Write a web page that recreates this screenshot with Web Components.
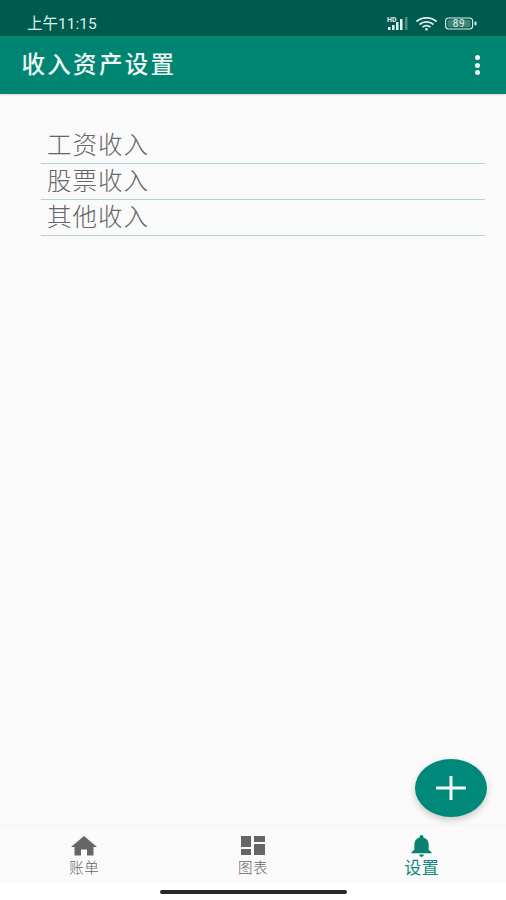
<!DOCTYPE html>
<html>
<head>
<meta charset="utf-8">
<style>
  html, body { margin: 0; height: 100%; background: #fff; }
  body { font-family: "Roboto", "Noto Sans CJK SC", sans-serif; }
</style>
</head>
<body>
<settings-screen>
  <income-row>工资收入</income-row>
  <income-row>股票收入</income-row>
  <income-row>其他收入</income-row>
</settings-screen>

<script>
const FONT = `"Roboto", "Noto Sans CJK SC", sans-serif`;

class StatusBar extends HTMLElement {
  constructor() {
    super();
    this.attachShadow({ mode: "open" });
  }
  connectedCallback() {
    this.shadowRoot.innerHTML = `
    <style>
      :host { display: flex; align-items: center; justify-content: space-between; height: 36px; padding: 10px 29px 0 27px; background: #005b4f; color: #dfeeea; font: 15.5px/1 ${FONT}; box-sizing: border-box; }
      span { margin-top: 4px; }
      .icons { display: flex; align-items: center; gap: 6px; }
      svg { display: block; }
    </style>
    <span>上午11:15</span>
    <div class="icons">
      <svg width="24" height="15" viewBox="0 0 24 15" fill="#e6f0ed">
        <text x="2" y="6" font-size="7" font-weight="700" font-family="Roboto">HD</text>
        <rect x="3" y="11" width="2.500" height="3"/>
        <rect x="7" y="9" width="2.500" height="5"/>
        <rect x="11" y="6" width="2.500" height="8"/>
        <rect x="15" y="3" width="2.500" height="11"/>
        <rect x="20" y="1" width="2.500" height="13" opacity=".35"/>
      </svg>
      <svg width="24" height="15" viewBox="0 0 24 15" fill="none" stroke="#e6f0ed" stroke-width="1.700">
        <path d="M1.500 5.500C7 .6 16 .6 21.500 5.500"/>
        <path d="M4.500 8.500C8.500 5 14.500 5 18.500 8.500"/>
        <path d="M7.500 11.200C9.800 9.400 13.200 9.400 15.500 11.200"/>
        <circle cx="11.500" cy="13.300" r="1.300" fill="#e6f0ed" stroke="none"/>
      </svg>
      <svg width="32" height="13" viewBox="0 0 32 13">
        <rect x=".6" y="1" width="27" height="11" rx="3" fill="none" stroke="#dfeeea" stroke-width="1.100"/>
        <rect x="2.500" y="2.800" width="23" height="7.400" rx="1.500" fill="#3f8577"/>
        <text x="14" y="10" text-anchor="middle" font-size="10" font-family="Roboto" fill="#e6f0ed" letter-spacing=".6">89</text>
        <rect x="29.500" y="4.500" width="2" height="4" rx="1" fill="#dfeeea"/>
      </svg>
    </div>`;
  }
}

class AppBar extends HTMLElement {
  constructor() {
    super();
    this.attachShadow({ mode: "open" });
  }
  connectedCallback() {
    this.shadowRoot.innerHTML = `
    <style>
      :host { display: flex; align-items: center; justify-content: space-between; height: 58px; padding: 0 26px 0 21.500px; background: #008573; color: #eef6f4; box-sizing: border-box; box-shadow: 0 1px 2px #0002; position: relative; }
      h1 { margin: 2px 0 0; font: 500 23.500px/1 ${FONT}; letter-spacing: 2.300px; }
      .more { display: flex; flex-direction: column; gap: 2.500px; }
      .more i { width: 5px; height: 5px; border-radius: 50%; background: #f2f8f6; }
    </style>
    <h1>${this.getAttribute("title")}</h1>
    <div class="more"><i></i><i></i><i></i></div>`;
  }
}

class IncomeRow extends HTMLElement {
  constructor() {
    super();
    this.attachShadow({ mode: "open" });
  }
  connectedCallback() {
    this.shadowRoot.innerHTML = `
    <style>
      :host { display: flex; align-items: center; height: 36px; padding: 1px 0 0 6px; box-sizing: border-box; border-bottom: 1px solid #b4d2d9; color: #666; font: 300 24.500px/1 ${FONT}; letter-spacing: 1px; }
    </style>
    <slot></slot>`;
  }
}

class NavItem extends HTMLElement {
  constructor() {
    super();
    this.attachShadow({ mode: "open" });
  }
  connectedCallback() {
    const active = this.hasAttribute("active");
    this.shadowRoot.innerHTML = `
    <style>
      :host { flex: 1; display: flex; flex-direction: column; align-items: center; font: ${active ? 400 : 300} ${active ? 17 : 14.5}px/16px ${FONT}; letter-spacing: ${active ? .4 : .6}px; }
      .icon { height: 25px; display: flex; align-items: center; margin-bottom: ${active ? 2 : 3}px; }
      span { color: ${active ? "#12897a" : "#666"}; }
      svg { display: block; }
    </style>
    <div class="icon"><slot></slot></div>
    <span>${this.getAttribute("label")}</span>`;
  }
}

class BottomNav extends HTMLElement {
  constructor() {
    super();
    this.attachShadow({ mode: "open" });
  }
  connectedCallback() {
    this.shadowRoot.innerHTML = `
    <style>
      :host { display: flex; height: 58px; padding-top: 7px; box-sizing: border-box; background: #fafafa; border-top: 1px solid #f3f3f3; }
    </style>
    <slot></slot>`;
  }
}

class AddButton extends HTMLElement {
  constructor() {
    super();
    this.attachShadow({ mode: "open" });
  }
  connectedCallback() {
    this.shadowRoot.innerHTML = `
    <style>
      :host { position: absolute; right: 19px; bottom: 83px; width: 72px; height: 58px; border-radius: 50%; background: #00897b; display: flex; align-items: center; justify-content: center; box-shadow: 0 3px 7px #0003; }
      svg { display: block; }
    </style>
    <svg width="30" height="24" viewBox="0 0 30 24"><path d="M0 12h30M15 0v24" stroke="#f4faf8" stroke-width="3" fill="none"/></svg>`;
  }
}

class SettingsScreen extends HTMLElement {
  constructor() {
    super();
    this.attachShadow({ mode: "open" });
  }
  connectedCallback() {
    this.shadowRoot.innerHTML = `
    <style>
      :host { display: flex; flex-direction: column; height: 900px; position: relative; background: #fff; overflow: hidden; }
      main { flex: 1; background: #fafafa; padding: 34px 21px 0 41px; display: flex; flex-direction: column; }
      .home { height: 17px; display: flex; align-items: center; justify-content: center; background: #fff; }
      .home i { width: 187px; height: 4px; border-radius: 2px; background: #2a2a2a; }
    </style>
    <status-bar></status-bar>
    <app-bar title="收入资产设置"></app-bar>
    <main><slot></slot></main>
    <add-button></add-button>
    <bottom-nav>
      <nav-item label="账单">
        <svg width="26" height="20" viewBox="0 0 26 20"><path d="M13 0 0 11h3.500v8.500h6.500v-6h6v6h6.500V11H26z" fill="#666"/></svg>
      </nav-item>
      <nav-item label="图表">
        <svg width="24" height="19" viewBox="0 0 24 19"><path d="M0 0h10v11H0zM0 13h10v6H0zM13 0h11v6H13zM13 8h11v11H13z" fill="#666"/></svg>
      </nav-item>
      <nav-item label="设置" active>
        <svg width="21" height="22" viewBox="0 0 21 23"><path d="M10.500 0a2 2 0 0 1 2 2v.600C16 3.500 18 6.500 18 10v5.500l3 2.500v1H0v-1l3-2.500V10c0-3.500 2-6.500 5.500-7.400V2a2 2 0 0 1 2-2zM8 20.500h5a2.500 2.500 0 0 1-5 0z" fill="#0a8272"/></svg>
      </nav-item>
    </bottom-nav>
    <div class="home"><i></i></div>`;
  }
}

customElements.define("status-bar", StatusBar);
customElements.define("app-bar", AppBar);
customElements.define("income-row", IncomeRow);
customElements.define("nav-item", NavItem);
customElements.define("bottom-nav", BottomNav);
customElements.define("add-button", AddButton);
customElements.define("settings-screen", SettingsScreen);
</script>
</body>
</html>
